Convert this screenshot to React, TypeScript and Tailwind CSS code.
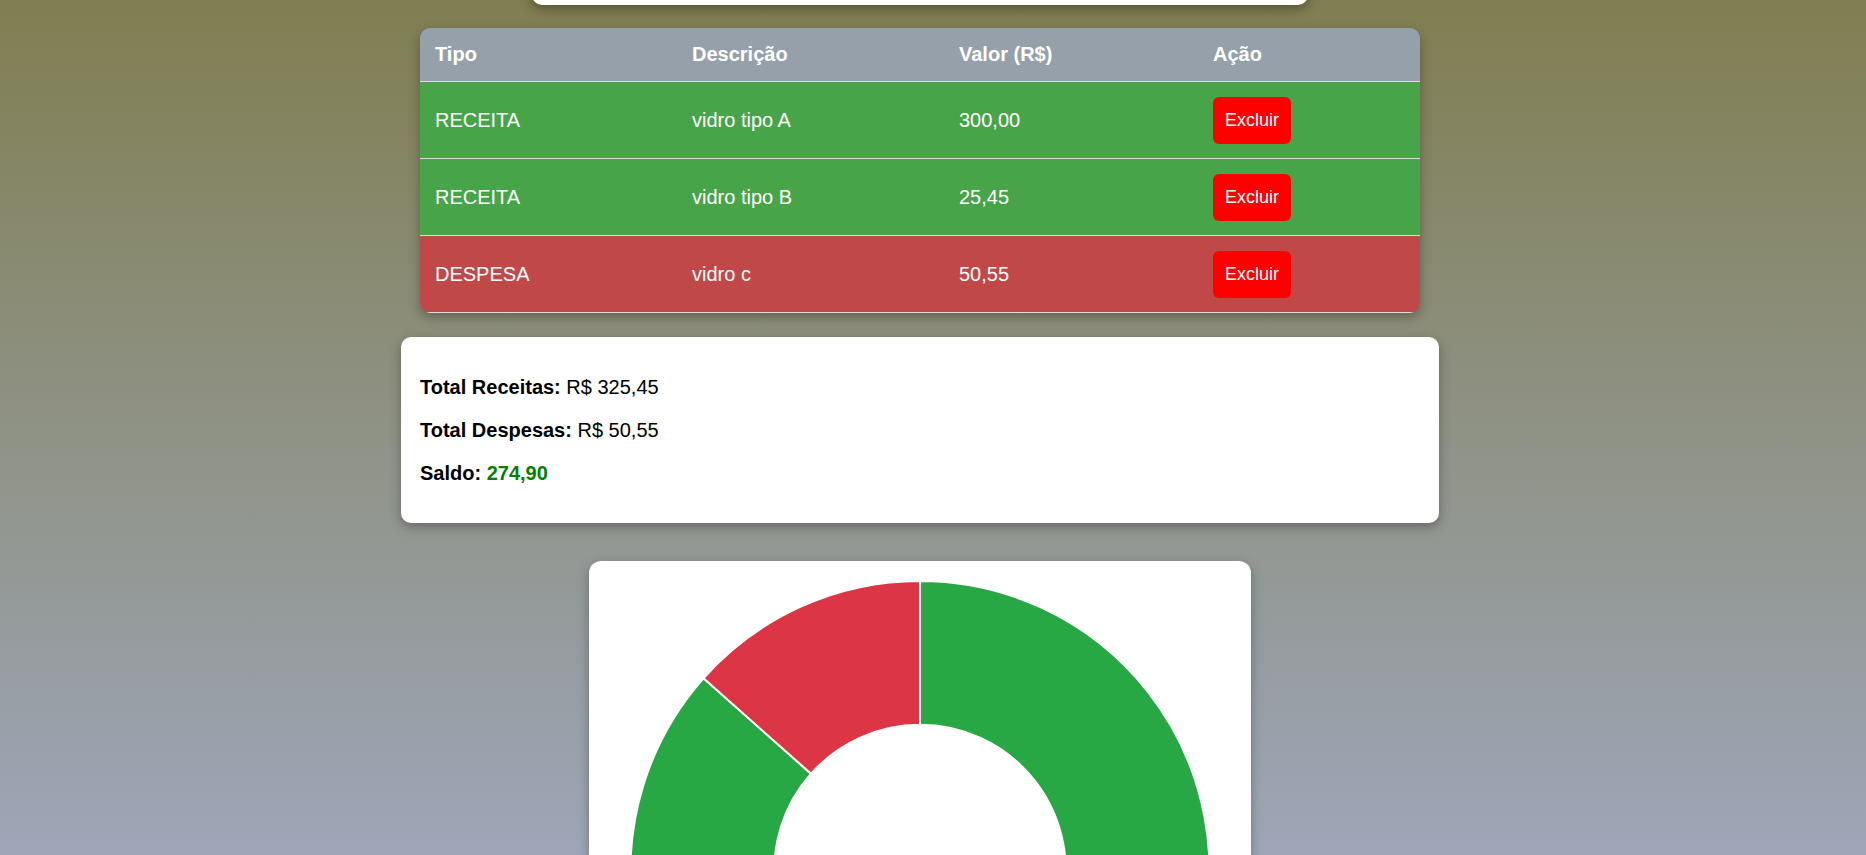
const items = [
  { tipo: "RECEITA", descricao: "vidro tipo A", valor: "300,00" },
  { tipo: "RECEITA", descricao: "vidro tipo B", valor: "25,45" },
  { tipo: "DESPESA", descricao: "vidro c", valor: "50,55" },
];

const cols = "grid grid-cols-[257px_267px_254px_222px] items-center";

function arcPath(cx: number, cy: number, R: number, r: number, a0: number, a1: number) {
  const p = (rad: number, a: number) => {
    const t = (a * Math.PI) / 180;
    return `${(cx + rad * Math.sin(t)).toFixed(2)} ${(cy - rad * Math.cos(t)).toFixed(2)}`;
  };
  const large = a1 - a0 > 180 ? 1 : 0;
  return `M ${p(R, a0)} A ${R} ${R} 0 ${large} 1 ${p(R, a1)} L ${p(r, a1)} A ${r} ${r} 0 ${large} 0 ${p(r, a0)} Z`;
}

function Donut() {
  const receitas = 325.45;
  const despesas = 50.55;
  const split = (receitas / (receitas + despesas)) * 360;
  const cx = 331;
  const cy = 309.5;
  return (
    <svg width="662" height="620" viewBox="0 0 662 620">
      <path d={arcPath(cx, cy, 289.5, 145.75, 0, split)} fill="#28a745" stroke="#fff" strokeWidth="2" />
      <path d={arcPath(cx, cy, 289.5, 145.75, split, 360)} fill="#dc3545" stroke="#fff" strokeWidth="2" />
    </svg>
  );
}

export default function App() {
  return (
    <main
      className="h-screen overflow-hidden bg-linear-to-b from-[#807e51] to-[#9ea6b8] pr-[26px] text-[20px]"
      style={{ fontFamily: '"Liberation Sans", Arial, sans-serif' }}
    >
      <div className="flex flex-col items-center">
        <div className="-mt-[195px] h-[200px] w-[776px] rounded-[10px] bg-white shadow-[0_4px_12px_rgba(0,0,0,0.35)]" />

        <div className="mt-[23px] w-[1000px] overflow-hidden rounded-[10px] text-white shadow-[0_4px_12px_rgba(0,0,0,0.3)]">
          <div className={`${cols} h-[54px] border-b border-[#dcdcdc] bg-[#96a0aa] pb-[2px] font-bold`}>
            <div className="pl-[15px]">Tipo</div>
            <div className="pl-[15px]">Descrição</div>
            <div className="pl-[15px]">Valor (R$)</div>
            <div className="pl-[15px]">Ação</div>
          </div>
          {items.map((item) => (
            <div
              key={item.descricao}
              className={`${cols} h-[77px] border-b border-[#dcdcdc] ${
                item.tipo === "RECEITA" ? "bg-[#48a449]" : "bg-[#c14848]"
              }`}
            >
              <div className="pl-[15px]">{item.tipo}</div>
              <div className="pl-[15px]">{item.descricao}</div>
              <div className="pl-[15px]">{item.valor}</div>
              <div className="pl-[15px]">
                <button className="flex h-[47px] w-[78px] items-center justify-center rounded-[6px] bg-[#ff0000] text-[18px] text-white">
                  Excluir
                </button>
              </div>
            </div>
          ))}
        </div>

        <div className="mt-[24px] flex w-[1038px] flex-col gap-[20px] rounded-[10px] bg-white px-[19px] pt-[39px] pb-[38px] leading-[23px] text-black shadow-[0_4px_12px_rgba(0,0,0,0.3)]">
          <p>
            <strong>Total Receitas:</strong> R$ 325,45
          </p>
          <p>
            <strong>Total Despesas:</strong> R$ 50,55
          </p>
          <p>
            <strong>Saldo:</strong> <strong className="text-[#008000]">274,90</strong>
          </p>
        </div>

        <div className="mt-[38px] w-[662px] shrink-0 rounded-[12px] bg-white shadow-[0_4px_12px_rgba(0,0,0,0.3)]">
          <Donut />
        </div>
      </div>
    </main>
  );
}
